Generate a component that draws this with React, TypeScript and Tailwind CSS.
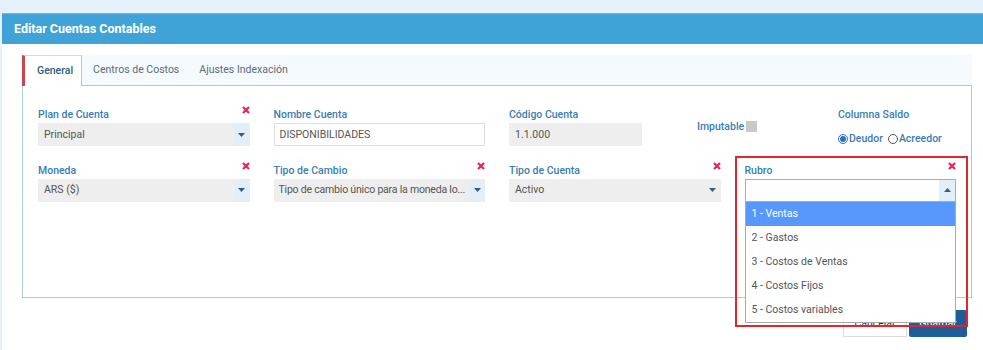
import React from "react";

const label = "text-[10.5px] font-medium text-[#3a7db3] leading-[16px] h-[16px]";

function Xmark() {
  return (
    <svg width="8" height="8" viewBox="0 0 8 8" className="absolute right-0 -top-[1px]">
      <path d="M1 1L7 7M7 1L1 7" stroke="#e0245e" strokeWidth="2.2" />
    </svg>
  );
}

function Caret({ up = false }: { up?: boolean }) {
  return (
    <svg width="7" height="4" viewBox="0 0 7 4">
      <path d={up ? "M0 4h7L3.5 0z" : "M0 0h7L3.5 4z"} fill="#2d5f8b" />
    </svg>
  );
}

function Select({ value, blue = true, tight = false }: { value: string; blue?: boolean; tight?: boolean }) {
  return (
    <div className="flex h-[23px] items-center bg-[#eeeeee]">
      <span
        className={
          tight
            ? "flex-1 whitespace-nowrap pl-[5px] text-[10.5px] tracking-[-0.2px] text-[#555]"
            : "flex-1 overflow-hidden whitespace-nowrap pl-[6px] text-[10.5px] text-[#555]"
        }
      >
        {value}
      </span>
      <span
        className={
          blue
            ? "flex h-full w-[16px] shrink-0 items-center justify-center bg-[#e2eef8]"
            : "flex h-full w-[16px] shrink-0 items-center justify-center"
        }
      >
        <Caret />
      </span>
    </div>
  );
}

const rubros = ["1 - Ventas", "2 - Gastos", "3 - Costos de Ventas", "4 - Costos Fijos", "5 - Costos variables"];

export default function App() {
  return (
    <div className="h-[350px] w-[983px] bg-[#e6f2fb] pl-[2px] pt-[13px] font-['Roboto',sans-serif]">
      <div className="h-full bg-white">
        {/* modal header */}
        <div className="flex h-[31px] items-center border-t border-[#6bb8e0] bg-[#3fa3d7] pl-[12px] text-[12.5px] font-bold text-white">
          Editar Cuentas Contables
        </div>

        <div className="pl-[20px] pt-[11px]">
          {/* tabs */}
          <div className="flex h-[31px] w-[950px] border-b border-[#a9cbe0] bg-[#f4fafe] text-[10.5px]">
            <div className="-mb-px flex items-center border-l-[3px] border-r border-t border-l-[#d0414f] border-r-[#a9cbe0] border-t-[#c5dcea] bg-white pl-[12px] pr-[8px] font-medium text-[#2e5b80]">
              General
            </div>
            <div className="flex items-center pl-[11px] pr-[8px] text-[#5d6b78]">Centros de Costos</div>
            <div className="flex items-center pl-[12px] pr-[10px] text-[#5d6b78]">Ajustes Indexación</div>
          </div>

          {/* tab panel */}
          <div className="h-[212px] w-[950px] border-x border-b border-[#a9cbe0] pl-[15px] pt-[21px]">
            <div className="grid w-[918px] grid-cols-12 gap-x-[24px] gap-y-[16px]">
              <div className="relative col-span-3">
                <div className={label}>Plan de Cuenta</div>
                <Select value="Principal" />
                <Xmark />
              </div>
              <div className="col-span-3">
                <div className={label}>Nombre Cuenta</div>
                <div className="flex h-[23px] items-center border border-[#dddddd] pl-[5px] text-[10.5px] text-[#555]">
                  DISPONIBILIDADES
                </div>
              </div>
              <div className="col-span-2">
                <div className={label}>Código Cuenta</div>
                <div className="flex h-[23px] items-center bg-[#eeeeee] pl-[6px] text-[10.5px] text-[#555]">1.1.000</div>
              </div>
              <div className="col-span-2 flex items-center pl-[31px]">
                <span className="text-[10.5px] font-medium text-[#3a7db3]">Imputable</span>
                <span className="ml-[2px] h-[11px] w-[11px] bg-[#c9c9c9]" />
              </div>
              <div className="col-span-2 pl-[15px]">
                <div className={label}>Columna Saldo</div>
                <div className="flex items-center pt-[8px] text-[10.5px] font-medium text-[#3a7db3]">
                  <span className="mr-[1px] flex h-[10px] w-[10px] items-center justify-center rounded-full border border-[#2a6fd0]">
                    <span className="h-[6px] w-[6px] rounded-full bg-[#2a6fd0]" />
                  </span>
                  <span>Deudor</span>
                  <span className="ml-[5px] mr-[1px] h-[10px] w-[10px] rounded-full border border-[#555]" />
                  <span>Acreedor</span>
                </div>
              </div>

              <div className="relative col-span-3">
                <div className={label}>Moneda</div>
                <Select value="ARS ($)" />
                <Xmark />
              </div>
              <div className="relative col-span-3">
                <div className={label}>Tipo de Cambio</div>
                <Select value="Tipo de cambio único para la moneda lo..." tight />
                <Xmark />
              </div>
              <div className="relative col-span-3">
                <div className={label}>Tipo de Cuenta</div>
                <Select value="Activo" blue={false} />
                <Xmark />
              </div>
              <div className="relative col-span-3">
                <div className={label}>Rubro</div>
                <div className="flex h-[23px] items-center border border-[#86b5df] bg-white">
                  <span className="flex-1" />
                  <span className="flex h-full w-[16px] items-center justify-center bg-[#e2eef8]">
                    <Caret up />
                  </span>
                </div>
                <Xmark />
                {/* open dropdown */}
                <div className="absolute left-0 right-0 top-[39px] z-10 border-x border-b border-[#aaaaaa] bg-white text-[10.5px]">
                  {rubros.map((r, i) => (
                    <div
                      key={r}
                      className={
                        i === 0
                          ? "flex h-[24px] items-center bg-[#5897fb] pl-[6px] text-white"
                          : "flex h-[24px] items-center pl-[6px] text-[#555]"
                      }
                    >
                      {r}
                    </div>
                  ))}
                </div>
                {/* highlight box */}
                <div className="absolute -left-[10px] -right-[12px] -top-[7px] z-20 h-[171px] border-2 border-[#e3262e]" />
              </div>
            </div>
          </div>

          {/* footer buttons */}
          <div className="flex w-[950px] justify-end gap-[2px] pr-[5px] pt-[12px] text-[10.5px]">
            <div className="flex h-[27px] w-[64px] items-center justify-center border border-[#dddddd] text-[#333]">
              Cancelar
            </div>
            <div className="flex h-[27px] w-[58px] items-center justify-center rounded-[2px] bg-[#1d5d98] text-white">
              Guardar
            </div>
          </div>
        </div>
      </div>
    </div>
  );
}
